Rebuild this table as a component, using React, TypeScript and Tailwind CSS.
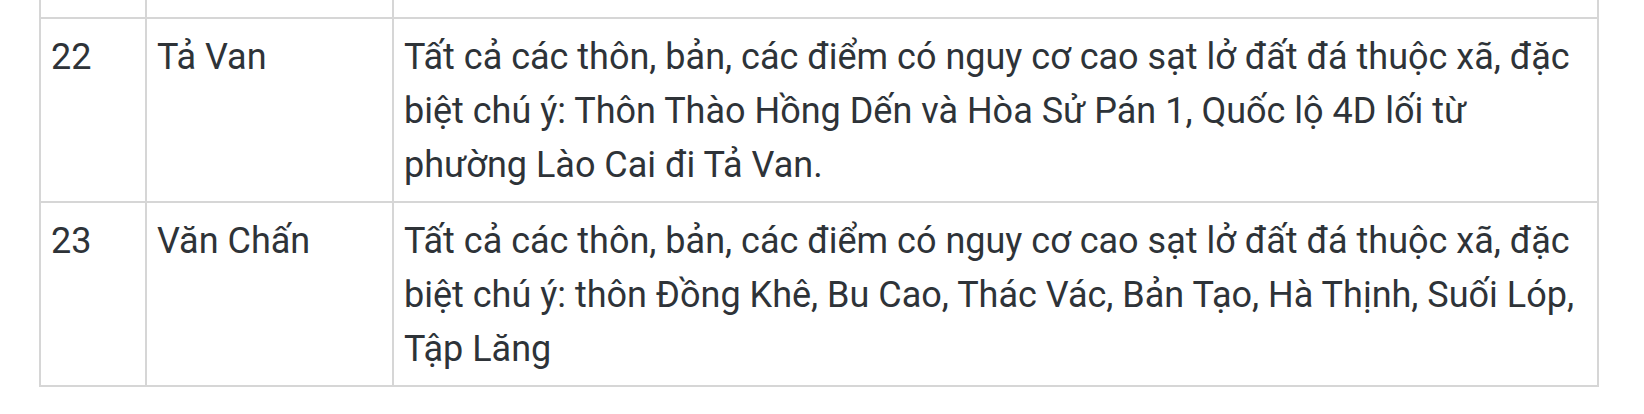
type Row = {
  no: string;
  name: string;
  lines: string[];
};

const rows: Row[] = [
  {
    no: "22",
    name: "Tả Van",
    lines: [
      "Tất cả các thôn, bản, các điểm có nguy cơ cao sạt lở đất đá thuộc xã, đặc",
      "biệt chú ý: Thôn Thào Hồng Dến và Hòa Sử Pán 1, Quốc lộ 4D lối từ",
      "phường Lào Cai đi Tả Van.",
    ],
  },
  {
    no: "23",
    name: "Văn Chấn",
    lines: [
      "Tất cả các thôn, bản, các điểm có nguy cơ cao sạt lở đất đá thuộc xã, đặc",
      "biệt chú ý: thôn Đồng Khê, Bu Cao, Thác Vác, Bản Tạo, Hà Thịnh, Suối Lóp,",
      "Tập Lăng",
    ],
  },
];

const cell = "border-2 border-[#d6d6d6] px-[10px] pt-[11px] pb-[9px] align-top";

export default function App() {
  return (
    <main className="min-h-screen bg-white pl-[39px] pr-[45px] font-['Roboto','Noto_Sans',sans-serif] text-[36px] leading-[54px] text-[#2e3338]">
      <table className="w-[1560px] table-fixed border-collapse">
        <colgroup>
          <col className="w-[106px]" />
          <col className="w-[247px]" />
          <col />
        </colgroup>
        <tbody>
          {/* tail of the previous row, cut off by the top of the view */}
          <tr className="h-[18px]">
            <td className="border-2 border-t-0 border-[#d6d6d6] p-0" />
            <td className="border-2 border-t-0 border-[#d6d6d6] p-0" />
            <td className="border-2 border-t-0 border-[#d6d6d6] p-0" />
          </tr>
          {rows.map((row) => (
            <tr key={row.no}>
              <td className={cell}>{row.no}</td>
              <td className={cell}>{row.name}</td>
              <td className={cell}>
                {row.lines.map((line) => (
                  <span key={line} className="block whitespace-nowrap">
                    {line}
                  </span>
                ))}
              </td>
            </tr>
          ))}
        </tbody>
      </table>
    </main>
  );
}
